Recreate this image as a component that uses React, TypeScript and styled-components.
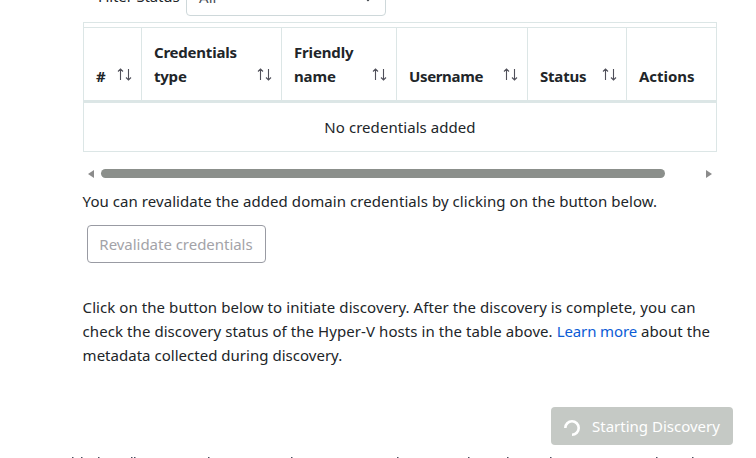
import React from "react";
import styled, { createGlobalStyle } from "styled-components";

const GlobalStyle = createGlobalStyle`
  *, *::before, *::after { box-sizing: border-box; }
  body {
    margin: 0;
    background: #fff;
    color: #212529;
    font-family: "Noto Sans", "Open Sans", sans-serif;
    font-size: 15px;
    line-height: 24px;
    letter-spacing: 0.06px;
  }
`;

const Page = styled.main`
  display: flex;
  flex-direction: column;
  width: 756px;
  height: 458px;
  padding-left: 82.6px;
  overflow: hidden;
`;

const FilterRow = styled.div`
  display: flex;
  align-items: flex-end;
  flex: none;
  height: 38px;
  margin-top: -22px;
  padding-left: 15.4px;
`;

const FilterLabel = styled.label`
  width: 88px;
  height: 38px;
  padding-top: 6px;
  letter-spacing: -0.15px;
  color: #212529;
  white-space: nowrap;
`;

const Select = styled.div`
  display: flex;
  justify-content: space-between;
  width: 200px;
  height: 38px;
  padding: 6px 12px;
  border: 1px solid #ced8da;
  border-radius: 4px;
  color: #495057;

  svg { margin-top: 9px; }
`;

const TableFrame = styled.section`
  flex: none;
  width: 634px;
  height: 130px;
  margin-top: 6px;
  margin-left: 0.4px;
  padding-top: 4px;
  border: 1px solid #dce6e6;
`;

const HeaderRow = styled.div`
  display: grid;
  grid-template-columns: 58px 140px 115px 131px 99px 89px;
  height: 76px;
  border-top: 1px solid #dce6e6;
  border-bottom: 3px solid #dce6e6;
`;

const HeaderCell = styled.div`
  display: flex;
  align-items: flex-end;
  justify-content: space-between;
  padding: 12px 9px 12px 12px;
  border-right: 1px solid #dce6e6;
  font-weight: 700;

  &:last-child { border-right: 0; }
`;

const HeaderLabel = styled.span<{ $spacing?: number }>`
  letter-spacing: ${(p) => p.$spacing ?? -0.15}px;
  white-space: pre-line;
`;

const SortIcon = styled.svg`
  flex: none;
  width: 15px;
  height: 13px;
  margin-bottom: 7px;
  fill: none;
  stroke: #50505a;
  stroke-width: 1.1;
`;

const EmptyRow = styled.div`
  height: 48px;
  padding-top: 12px;
  text-align: center;
`;

const Scrollbar = styled.div`
  display: flex;
  align-items: center;
  flex: none;
  width: 634px;
  height: 17px;
  margin-top: 13px;
  margin-left: 0.4px;
  padding: 0 5px;
`;

const Track = styled.div`
  flex: 1;
  margin: 0 7px;
`;

const Thumb = styled.div`
  width: 564px;
  height: 9px;
  border-radius: 5px;
  background: #8b8f8b;
`;

const Paragraph = styled.p<{ $top: number }>`
  flex: none;
  margin: ${(p) => p.$top}px 0 0;
`;

const Line = styled.span<{ $spacing?: number }>`
  display: block;
  letter-spacing: ${(p) => p.$spacing ?? 0.06}px;
  white-space: nowrap;
`;

const Link = styled.a`
  color: #0b5cd6;
  letter-spacing: -0.12px;
  text-decoration: none;
`;

const OutlineButton = styled.button`
  flex: none;
  align-self: flex-start;
  width: 179px;
  height: 38px;
  margin: 12px 0 0 4.4px;
  padding: 0 1px 0 0;
  border: 1px solid #999ba3;
  border-radius: 4px;
  background: #fff;
  color: #a3a3a8;
  font: inherit;
  letter-spacing: -0.03px;
`;

const DiscoveryButton = styled.button`
  display: flex;
  align-items: center;
  flex: none;
  align-self: flex-end;
  width: 182px;
  height: 38px;
  margin: 40px 23px 0 0;
  padding: 0 0 0 13px;
  border: 0;
  border-radius: 4px;
  background: #c5c9c5;
  color: #fff;
  font: inherit;
  gap: 12px;

  svg { margin-top: 4px; }
`;

const ClippedLine = styled.svg`
  flex: none;
  width: 673px;
  height: 1px;
  margin-top: 12px;
  margin-left: -10.6px;
  fill: #4b5060;
`;

const columns = [
  { label: "#", sortable: true },
  { label: "Credentials\ntype", sortable: true, spacing: -0.22 },
  { label: "Friendly\nname", sortable: true, spacing: -0.15 },
  { label: "Username", sortable: true, spacing: -0.35 },
  { label: "Status", sortable: true, spacing: -0.2 },
  { label: "Actions", sortable: false, spacing: -0.05 },
];

const ascenders = [0, 9, 26, 59, 62, 136, 219, 325, 396, 435, 478, 584, 620];

function SortArrows() {
  return (
    <SortIcon viewBox="0 0 15 13">
      <path d="M3.5 12V1M1 3.5 3.5 1 6 3.5M11.5 1v11M9 9.5l2.5 2.5L14 9.5" />
    </SortIcon>
  );
}

export default function App() {
  return (
    <>
      <GlobalStyle />
      <Page>
        <FilterRow>
          <FilterLabel>Filter Status</FilterLabel>
          <Select>
            All
            <svg width="10" height="8" viewBox="0 0 10 8">
              <path d="M1 2l4 4 4-4" fill="none" stroke="#343a40" strokeWidth="2" />
            </svg>
          </Select>
        </FilterRow>

        <TableFrame>
          <HeaderRow>
            {columns.map((c) => (
              <HeaderCell key={c.label}>
                <HeaderLabel $spacing={c.spacing}>{c.label}</HeaderLabel>
                {c.sortable && <SortArrows />}
              </HeaderCell>
            ))}
          </HeaderRow>
          <EmptyRow>No credentials added</EmptyRow>
        </TableFrame>

        <Scrollbar>
          <svg width="6" height="8" viewBox="0 0 6 8">
            <path d="M0 4 6 0v8z" fill="#8b8b8b" />
          </svg>
          <Track>
            <Thumb />
          </Track>
          <svg width="6" height="8" viewBox="0 0 6 8">
            <path d="M6 4 0 0v8z" fill="#8b8b8b" />
          </svg>
        </Scrollbar>

        <Paragraph $top={7}>
          <Line>You can revalidate the added domain credentials by clicking on the button below.</Line>
        </Paragraph>
        <OutlineButton disabled>Revalidate credentials</OutlineButton>

        <Paragraph $top={32}>
          <Line $spacing={0.07}>
            Click on the button below to initiate discovery. After the discovery is complete, you can
          </Line>
          <Line $spacing={0.07}>
            check the discovery status of the Hyper-V hosts in the table above.{" "}
            <Link href="#">Learn more</Link> about the
          </Line>
          <Line $spacing={0.02}>metadata collected during discovery.</Line>
        </Paragraph>

        <DiscoveryButton disabled>
          <svg width="16" height="16" viewBox="0 0 16 16">
            <path d="M1.3 8A6.7 6.7 0 1 1 8 14.7" fill="none" stroke="#fff" strokeWidth="2.6" />
          </svg>
          Starting Discovery
        </DiscoveryButton>

        <ClippedLine viewBox="0 0 673 1">
          {ascenders.map((x) => (
            <rect key={x} x={x} y="0" width="1.5" height="1" />
          ))}
        </ClippedLine>
      </Page>
    </>
  );
}
